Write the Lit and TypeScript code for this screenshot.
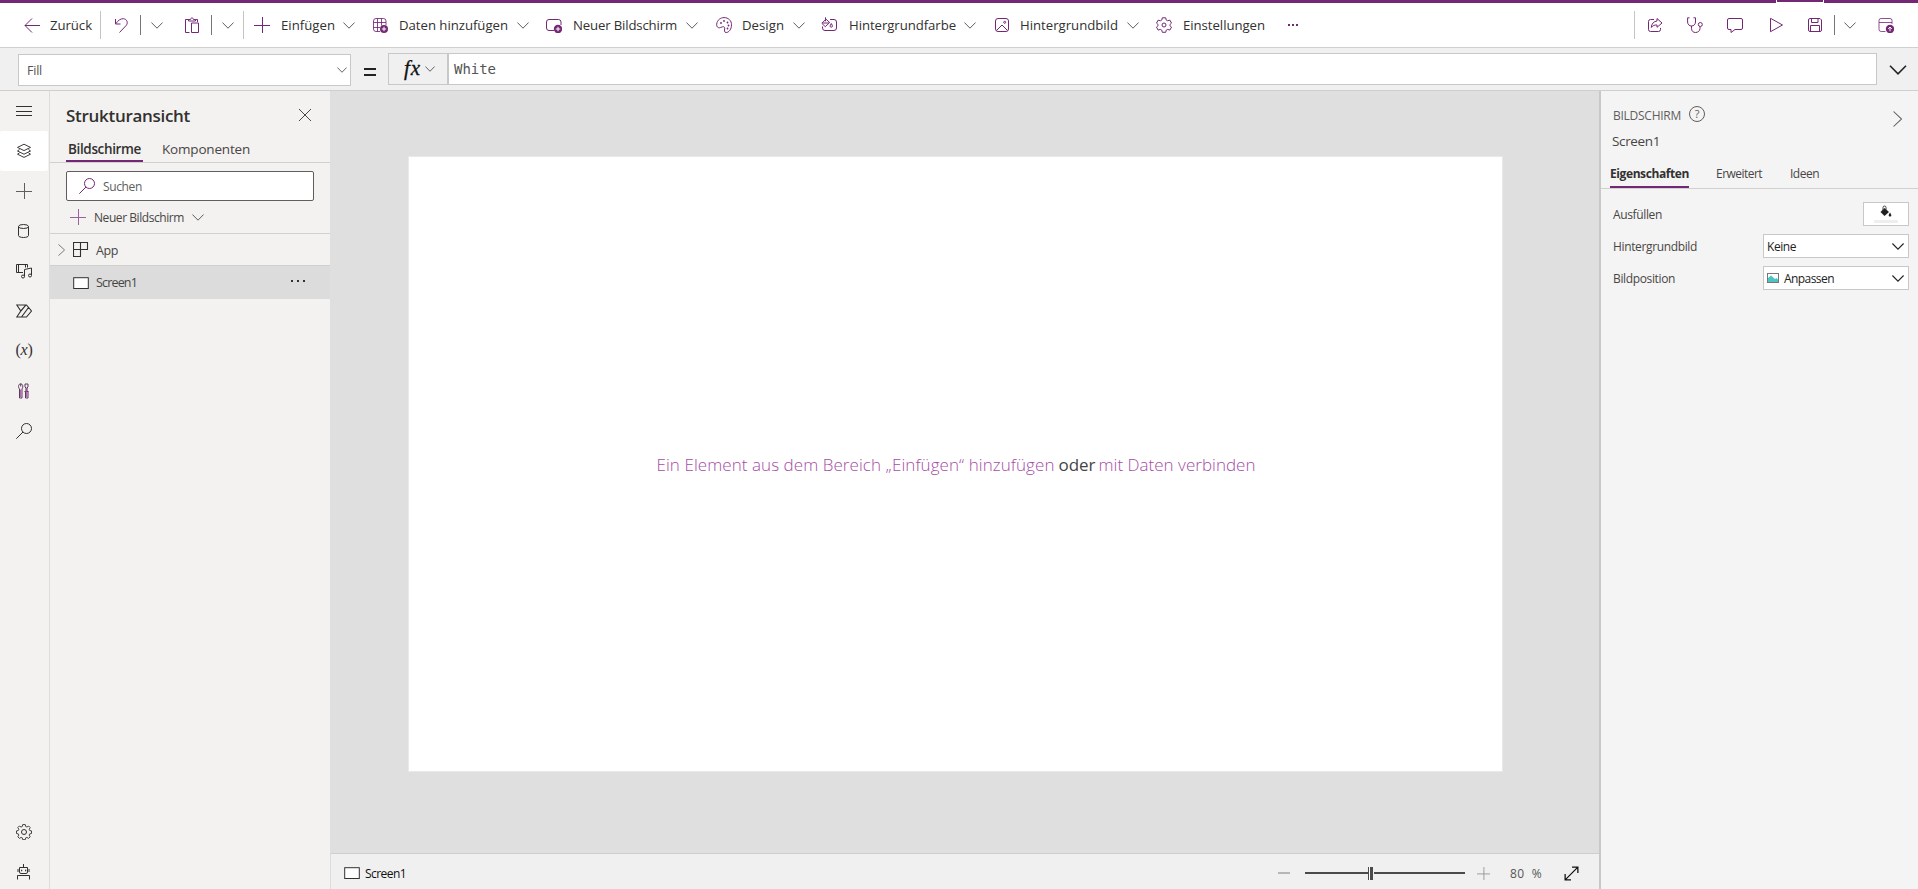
import { LitElement, html, svg, css, nothing } from 'lit';
import { customElement, property } from 'lit/decorators.js';
import { styleMap } from 'lit/directives/style-map.js';

/* A single-line label that tracks its glyphs so that it fills a given width. */
@customElement('ui-label')
class UiLabel extends LitElement {
  @property({ type: Number }) w = 0;
  static styles = css`
    :host { display: inline-block; white-space: pre; flex: none; }
    .t { display: inline-block; }
  `;
  render() {
    return html`<span class="t"><slot></slot></span>`;
  }
  firstUpdated() {
    const t = this.renderRoot.querySelector('.t') as HTMLElement;
    const n = (this.textContent ?? '').length;
    const natural = t.getBoundingClientRect().width;
    if (this.w && n) {
      t.style.letterSpacing = `${(this.w - natural) / n}px`;
      this.style.width = `${this.w}px`;
    }
  }
}

const P = '#742774';
const D = '#323130';

const glyphs: Record<string, any> = {
  back: svg`<path d="M16 8.500H1M8 1.500l-7 7 7 7"/>`,
  undo: svg`<path d="M1.500 2v5h5M1.800 6.700C4 3.500 6.500 1.500 9.500 1.700c3.500.4 4.800 4 2.800 6.600L5.500 15.500"/>`,
  paste: svg`<path d="M5.500 15.500h-4v-13h3M11.500 2.500h2V5M4.500 4V2.500h2C6.500.5 9.500.5 9.500 2.500h2V4zM7.500 6h7v9.500h-7z"/>`,
  plus: svg`<path d="M8.500 0v16M0 8.500h16"/>`,
  table: svg`<path d="M8 14.500H4a2.500 2.500 0 0 1-2.500-2.500V4A2.500 2.500 0 0 1 4 1.500h7.500A2.500 2.500 0 0 1 14 4v4M1.500 5.500H14M1.500 10.500H8M5.500 1.500v13M9.500 1.500v7" stroke-opacity=".85"/><circle cx="12" cy="12" r="4" fill=${P} stroke="none"/><path d="M12 9.800v4.400M9.800 12h4.400" stroke="#fff"/>`,
  screen: svg`<path d="M8 13.500H3A2.500 2.500 0 0 1 .5 11V5A2.500 2.500 0 0 1 3 2.500h9.500A2.500 2.500 0 0 1 15 5v3"/><circle cx="12" cy="12" r="4.200" fill=${P} stroke="none"/><path d="M12 9.800v4.400M9.800 12h4.400" stroke="#fff"/>`,
  palette: svg`<path d="M.7 7C1.200 3 4.500.6 8 .6c4.500 0 7.500 3 7.500 7.200 0 4.300-2.500 7.700-5.300 7.700-2.200 0-1.800-2.200-1.500-3.600.3-1.600-.8-2.600-2.200-2.100l-2.200.8C1.800 11.400.4 9.500.7 7z"/><g fill=${P} stroke="none"><circle cx="5" cy="6" r=".9"/><circle cx="8" cy="4" r=".9"/><circle cx="11.500" cy="5.500" r=".9"/><circle cx="12.500" cy="8.500" r=".9"/><circle cx="11.500" cy="11.500" r=".9"/></g>`,
  bucket: svg`<path d="M9 2.500h4A2.500 2.500 0 0 1 15.500 5v6a2.500 2.500 0 0 1-2.500 2.500H4A2.500 2.500 0 0 1 1.500 11V9.500M5 2.200L.8 6.300 4.300 9.700 8.700 5.500zM4.500.3v4M1.500 6h6.500M10.300 6.500c-1.800 2.600-1.300 3.700 0 3.700s1.600-1.200 0-3.700z"/>`,
  image: svg`<rect x="1.500" y="1.500" width="13" height="13" rx="2.500"/><path d="M2.500 13.500L8 8l5.500 5.500"/><circle cx="10.700" cy="5.300" r="1"/>`,
  gear: svg`<path d="M6.300.8h3.400l.5 2.200 1.500.8 2.100-.7 1.700 3-1.600 1.500v1l1.600 1.500-1.700 3-2.100-.7-1.500.8-.5 2.100H6.300l-.5-2.100-1.500-.8-2.100.7-1.700-3 1.600-1.500v-1L.5 6.100l1.700-3 2.100.7L5.800 3z"/><circle cx="8" cy="8" r="2"/>`,
  share: svg`<path d="M7 2.500H3.500a2 2 0 0 0-2 2v8a2 2 0 0 0 2 2h8a2 2 0 0 0 2-2V11M10 1.500L15 6l-5 4.300V8C7.500 7.800 6 8.500 4.300 10.500 4.500 6.500 7 4.300 10 4z"/>`,
  steth: svg`<path d="M2.500.8H.6V5c0 2.400 1.700 4 3.900 4s4-1.600 4-4V.8H6.500M4.500 9v2.500c0 2.500 1.700 4 4 4s4.500-1.500 4.500-4V9.500"/><circle cx="13.300" cy="7.500" r="2"/>`,
  comment: svg`<path d="M2 1.500h12A1.500 1.500 0 0 1 15.500 3v8a1.500 1.500 0 0 1-1.500 1.500H8l-4 3v-3H2A1.500 1.500 0 0 1 .5 11V3A1.500 1.500 0 0 1 2 1.500z"/>`,
  play: svg`<path d="M2.500 1.300v13.400L14.500 8z"/>`,
  save: svg`<path d="M3 1.500h10L14.500 3v10a1.500 1.500 0 0 1-1.500 1.500H3A1.500 1.500 0 0 1 1.500 13V3A1.500 1.500 0 0 1 3 1.500zM4.500 1.500v4h6.500v-4M3.500 14.500v-6h9v6"/>`,
  publish: svg`<path d="M7.500 14.500H3.200A2.200 2.200 0 0 1 1 12.300V3.500a2 2 0 0 1 2-2h9a2 2 0 0 1 2 2V7M1 5.500h13" stroke-opacity=".8"/><circle cx="12" cy="12" r="4.200" fill=${P} stroke="none"/><path d="M12 14.300V10M10.200 11.800L12 10l1.800 1.800" stroke="#fff"/>`,
  menu: svg`<path d="M0 3.500h16M0 8.500h16M0 12.500h16"/>`,
  layers: svg`<path d="M8 1.200l6.500 3.200L8 7.600 1.500 4.400zM1.500 8L8 11.200 14.500 8M1.500 11.200L8 14.400l6.500-3.200M3.500 6.500L1.500 8M12.500 6.500l2 1.500M3.500 9.800l-2 1.400M12.500 9.800l2 1.400" stroke-width=".95"/>`,
  db: svg`<ellipse cx="7.500" cy="3.500" rx="5" ry="2"/><path d="M2.500 3.500v9c0 1.200 2.200 2 5 2s5-.8 5-2v-9"/>`,
  media: svg`<path d="M7 9.500H.5v-8h11v3M2.500 1.500v8M9.500 1.500v3M8.500 13.500v-7l7-1.500v7"/><circle cx="7" cy="13.500" r="1.500"/><circle cx="14" cy="12.500" r="1.500"/>`,
  flow: svg`<path d="M.8 2h9.700L15.500 8l-5 6H.8l4-6zM4.800 8l5-5.800M5.500 14L12.500 4.500" stroke-width="1.150"/>`,
  tools: svg`<path d="M3.500 6v9h2.500V6M3.500 6C1.800 4 2.500.8 4.700.8S7.500 4 6 6M4.700.8v2.700M9 1h3v3l-1 1v3.500M9 1v3l1 1v3.500M8.500 8.500h4M9.500 8.500V15h2.500V8.500" stroke="#5c3a5c"/><path d="M4.700 6.500V14M10.700 4.500V14" stroke="#a04aa0"/>`,
  search: svg`<circle cx="10.500" cy="5.500" r="5"/><path d="M7 9L.3 15.700"/>`,
  cog: svg`<path d="M6.700.6h2.600l.4 1.900 1.200.5 1.700-1 1.600 1.600-1 1.700.5 1.200 1.800.4v2.600l-1.800.4-.5 1.200 1 1.700-1.600 1.600-1.700-1-1.200.5-.4 1.800H6.700l-.4-1.800-1.200-.5-1.700 1-1.600-1.600 1-1.700-.5-1.200L.5 9.500V6.900l1.800-.4.5-1.200-1-1.700L3.400 2l1.700 1 1.200-.5z" stroke-width=".9"/><circle cx="8" cy="8" r="2.500"/>`,
  bot: svg`<path d="M7.500 0v3M3.500 3.500h8v4.500a1.500 1.500 0 0 1-1.500 1.500H5A1.500 1.500 0 0 1 3.500 8zM2 5v3M13 5v3M1.500 15.500v-4h12v4"/><path d="M5 6.500h1.200M9 6.500h1.200" stroke-width="1.500"/>`,
  close: svg`<path d="M2 2l12 12M14 2L2 14"/>`,
  app: svg`<path d="M.5.500h14v7H.5zM7.500.500v14h-7V.500" stroke-width="1.100"/>`,
  rect: svg`<rect x=".7" y="2.700" width="14.600" height="10.800" fill="#fff"/>`,
  minus: svg`<path d="M2 8h12" />`,
  expand: svg`<path d="M2 14L14 2M8.500 2H14v5.500M2 8.500V14h5.500"/>`,
};

const icon = (name: string, color = P, size = 16, sw = 1) => html`<svg
  width=${size} height=${size} viewBox="0 0 16 16" fill="none" stroke=${color}
  stroke-width=${sw} style="flex:none;display:block">${glyphs[name]}</svg>`;

const chev = (w = 12, color = '#605e5c', sw = 1) => html`<svg
  width=${w} height=${w / 2 + 1} viewBox="0 0 12 7" fill="none" stroke=${color}
  stroke-width=${sw} style="flex:none;display:block"><path d="M.4 .5L6 6.200 11.600 .5"/></svg>`;

const chevRight = (w: number, h: number, color = '#605e5c') => html`<svg
  width=${w} height=${h} viewBox="0 0 8 16" fill="none" stroke=${color}
  preserveAspectRatio="none" style="flex:none;display:block"><path d="M.5 .5L7.500 8 .5 15.500"/></svg>`;

type Command = { icon: string; text: string; w: number; gap: number; lead: number; menu: number };

const commands: Command[] = [
  { icon: 'plus', text: 'Einfügen', w: 54, gap: 10, lead: 11, menu: 8 },
  { icon: 'table', text: 'Daten hinzufügen', w: 109, gap: 17, lead: 11, menu: 9 },
  { icon: 'screen', text: 'Neuer Bildschirm', w: 104, gap: 17, lead: 11, menu: 9 },
  { icon: 'palette', text: 'Design', w: 42, gap: 18, lead: 10, menu: 9 },
  { icon: 'bucket', text: 'Hintergrundfarbe', w: 107, gap: 16, lead: 12, menu: 8 },
  { icon: 'image', text: 'Hintergrundbild', w: 98, gap: 18, lead: 10, menu: 9 },
  { icon: 'gear', text: 'Einstellungen', w: 82, gap: 17, lead: 11, menu: 0 },
];

@customElement('app-root')
class AppRoot extends LitElement {
  static styles = css`
    :host {
      display: grid;
      grid-template-rows: 48px 43px 1fr;
      width: 1918px;
      height: 889px;
      overflow: hidden;
      box-sizing: border-box;
      font-family: 'Open Sans', 'Noto Sans', sans-serif;
      font-size: 13px;
      color: #323130;
      background: #f3f2f1;
    }
    * { box-sizing: border-box; }
    .toolbar {
      display: flex; align-items: center; background: #fff;
      border-top: 3px solid #742774; border-bottom: 1px solid #d0d0d0;
      padding-left: 24px; position: relative; font-size: 13.2px;
    }
    .notch {
      position: absolute; left: 1776px; top: -3px; width: 48px; height: 3px;
      border: 1px solid #fff; border-top: none;
    }
    .cmd { display: flex; align-items: center; }
    .sep { width: 1px; height: 28px; background: #c4c4c4; flex: none; }
    .bar { width: 1px; height: 20px; background: #767676; flex: none; }
    .right { display: flex; align-items: center; margin-left: auto; }
    .dots { display: flex; gap: 2px; margin-left: 23px; }
    .dots i { width: 2px; height: 2px; background: #742774; }

    .formula {
      display: flex; align-items: flex-start; background: #f0f0f0;
      border-bottom: 1px solid #cfcfcf; padding: 5px 0 0 18px;
    }
    .prop {
      display: flex; align-items: center; justify-content: space-between;
      width: 333px; height: 32px; margin-top: 1px; padding: 0 3px 0 8px;
      background: #fff; border: 1px solid #c8c8c8; font-size: 12.500px; color: #555;
    }
    .eq { margin: 15px 12px 0 13px; width: 12px; height: 8px;
      border: solid #222; border-width: 2px 0; }
    .fx { display: flex; align-items: center; width: 60px; height: 32px;
      border: 1px solid #c8c8c8; padding-left: 15px; gap: 4px;
      font: italic 21px 'Liberation Serif', serif; color: #111; line-height: 26px;
      -webkit-text-stroke: .3px #111; }
    .fx ui-label { height: 29px; }
    .input { width: 1429px; height: 32px; background: #fff; border: 1px solid #c8c8c8;
      padding-left: 5px; font: 14px/30px 'DejaVu Sans Mono', monospace; color: #555; }
    .more { margin: 12px 0 0 12px; }

    .body { display: grid; grid-template-columns: 50px 280px 1269px 1fr; min-height: 0; }
    .rail { display: flex; flex-direction: column; border-right: 1px solid #dcdcdc; background: #f3f2f1; min-height: 0; }
    .rail .cell { width: 48px; height: 40px; display: grid; place-items: center; flex: none; border-radius: 2px; }
    .rail .on { background: #fff; }
    .rail .push { margin-top: auto; }
    .rail .cell:last-child { margin-bottom: -3px; }
    .rail .var { font: 16px 'Liberation Serif', serif; line-height: 18px; padding-bottom: 3px; }
    .tree { background: #f3f2f1; display: flex; flex-direction: column; min-width: 0; }
    .head { display: flex; align-items: center; justify-content: space-between;
      height: 48px; padding: 0 17px 0 16px; font-size: 17px; font-weight: 600; }
    .tabs { display: flex; height: 24px; padding-left: 16px; border-bottom: 1px solid #d0d0d0;
      font-size: 13.500px; line-height: 21px; color: #484644; }
    .tab { padding: 0 2px; height: 23px; }
    .tab.on { font-weight: 600; color: #323130; border-bottom: 2px solid #742774; }
    .search { display: flex; align-items: center; gap: 8px; margin: 8px 16px 0; height: 30px;
      border: 1px solid #605e5c; border-radius: 2px; background: #fff; padding-left: 12px;
      font-size: 12px; color: #605e5c; }
    .new { display: flex; align-items: center; padding: 0 0 0 20px; font-size: 12px; gap: 8px;
      border-bottom: 1px solid #d0d0d0; height: 33px; color: #484644; }
    .node { display: flex; align-items: center; height: 32px; padding-left: 23px;
      border-bottom: 1px solid #d0d0d0; font-size: 12.500px; color: #484644; }
    .node.app { padding-left: 8px; }
    .node.app ui-label { padding-top: 2px; }
    .node.sel { background: #dcdcdc; height: 33px; border: none; }
    .ell { display: flex; gap: 4px; margin-left: auto; padding-right: 25px; padding-bottom: 4px; }
    .ell i { width: 2px; height: 2px; background: #323130; }

    .stage { display: grid; grid-template-rows: 1fr 36px; background: #dfdfdf; min-width: 0; }
    .canvas { display: flex; align-items: flex-start; padding: 65px 0 0 78px; }
    .page { width: 1095px; height: 616px; background: #fff; border: 1px solid #e9e9e9;
      display: flex; justify-content: center; align-items: center; font-size: 17px; line-height: 24px;
      padding: 2px 0 0 1px; }
    .link { color: #a54ca5; font-weight: 300; }
    .or { margin: 0 3px 0 4px; color: #444; }
    .status { display: flex; align-items: center; background: #f0f0f0; border-top: 1px solid #cfcfcf;
      border-left: 1px solid #dcdcdc; padding: 3px 0 0 13px; font-size: 12px; color: #111; }
    .zoom { display: flex; align-items: center; margin-left: auto; color: #555; }
    .track { display: flex; align-items: center; width: 160px; margin: 0 12px 0 13px; }
    .track .a { height: 2px; width: 63px; background: #4a4a4a; }
    .track .b { height: 2px; flex: 1; background: #4a4a4a; }
    .thumb { width: 5px; height: 13px; border: solid #4a4a4a; border-width: 0 3px 0 1px; background: #fff; margin-right: 1px; }

    .props { background: #f4f4f4; border-left: 2px solid #c8c8c8; font-size: 12px; color: #484644; }
    .phead { display: flex; height: 39px; padding: 0 16px 0 12px; color: #605e5c; }
    .phead ui-label { margin-top: 16px; line-height: 17px; }
    .help { margin: 15px 0 0 8px; width: 16px; height: 16px; border: 1px solid #605e5c; border-radius: 50%;
      font-size: 11px; line-height: 14px; text-align: center; }
    .go { margin: 20px 0 0 auto; }
    .pname { padding: 1px 0 0 11px; font-size: 13.500px; line-height: 20px; height: 36px; }
    .ptabs { display: flex; height: 23px; padding-left: 9px; border-bottom: 1px solid #d0d0d0; line-height: 16px; }
    .ptabs .on { font-weight: 700; color: #323130; border-bottom: 2px solid #742774; height: 22px; margin-right: 27px; }
    .ptabs .mid { margin-right: 28px; }
    .rows { display: flex; flex-direction: column; gap: 8px; padding: 13px 9px 0 12px; }
    .row { display: flex; align-items: center; justify-content: space-between; height: 24px; }
    .box { display: flex; align-items: center; border: 1px solid #c8c8c8; background: #fff; height: 24px;
      width: 146px; padding: 0 4px 0 3px; color: #222; gap: 5px; }
    .box svg:last-child { margin-left: auto; }
    .box.fill { width: 46px; padding: 2px 0 0; flex-direction: column; gap: 0; }
    .shade { width: 24px; height: 3px; margin-top: 1px; background: #eee; border-radius: 1px; }
  `;

  private gap(px: number) {
    return html`<span style=${styleMap({ width: `${px}px`, flex: 'none' })}></span>`;
  }

  private toolbar() {
    const g = this.gap;
    return html`<div class="toolbar">
      <div class="notch"></div>
      ${icon('back')}${g(10)}<ui-label w="42">Zurück</ui-label>${g(8)}<div class="sep"></div>
      ${g(13)}${icon('undo')}${g(10)}<div class="bar"></div>${g(10)}${chev()}
      ${g(21)}${icon('paste')}${g(11)}<div class="bar"></div>${g(10)}${chev()}
      ${g(9)}<div class="sep"></div>
      ${commands.map(
        (c) => html`${g(c.gap)}<div class="cmd">${icon(c.icon)}${g(c.lead)}<ui-label w=${c.w}>${c.text}</ui-label>
          ${c.menu ? html`${g(c.menu)}${chev()}` : nothing}</div>`,
      )}
      <div class="dots"><i></i><i></i><i></i></div>
      <div class="right">
        <div class="sep"></div>${g(12)}${icon('share')}${g(24)}${icon('steth')}${g(24)}${icon('comment')}
        ${g(25)}${icon('play')}${g(23)}${icon('save')}${g(11)}<div class="bar"></div>${g(9)}${chev()}
        ${g(22)}${icon('publish')}${g(24)}
      </div>
    </div>`;
  }

  private formula() {
    return html`<div class="formula">
      <div class="prop"><ui-label w="15">Fill</ui-label>${chev(10, '#444')}</div>
      <div class="eq"></div>
      <div class="fx"><ui-label w="17">fx</ui-label>${chev(10, '#444')}</div>
      <div class="input"><ui-label w="42">White</ui-label></div>
      <div class="more">${chev(18, '#222', 1.1)}</div>
    </div>`;
  }

  private rail() {
    const cell = (n: string, cls = '') => html`<div class="cell ${cls}">${icon(n, D)}</div>`;
    return html`<div class="rail">
      ${cell('menu')}${cell('layers', 'on')}
      <div class="cell">${icon('plus', '#605e5c')}</div>
      ${cell('db')}${cell('media')}${cell('flow')}
      <div class="cell var"><ui-label w="17">(<i>x</i>)</ui-label></div>
      ${cell('tools')}${cell('search')}${cell('cog', 'push')}${cell('bot')}
    </div>`;
  }

  private tree() {
    return html`<div class="tree">
      <div class="head"><ui-label w="124">Strukturansicht</ui-label>${icon('close', '#484644')}</div>
      <div class="tabs">
        <div class="tab on"><ui-label w="73">Bildschirme</ui-label></div>${this.gap(17)}
        <div class="tab"><ui-label w="88">Komponenten</ui-label></div>
      </div>
      <div class="search">${icon('search')}<ui-label w="39">Suchen</ui-label></div>
      <div class="new">${icon('plus', '#9a629a')}<ui-label w="90">Neuer Bildschirm</ui-label>${chev()}</div>
      <div class="node app">${chevRight(7, 12)}${this.gap(8)}${icon('app', D)}${this.gap(7)}<ui-label w="22">App</ui-label></div>
      <div class="node sel">${icon('rect', D)}${this.gap(7)}<ui-label w="41">Screen1</ui-label>
        <div class="ell"><i></i><i></i><i></i></div></div>
    </div>`;
  }

  private stage() {
    return html`<div class="stage">
      <div class="canvas"><div class="page">
        <ui-label class="link" w="398">Ein Element aus dem Bereich „Einfügen“ hinzufügen</ui-label>
        <ui-label class="or" w="37">oder</ui-label>
        <ui-label class="link" w="157">mit Daten verbinden</ui-label>
      </div></div>
      <div class="status">
        ${icon('rect', D)}${this.gap(5)}<ui-label w="41">Screen1</ui-label>
        <div class="zoom">
          ${icon('minus', '#a8a8a8', 16, 1.6)}
          <div class="track"><div class="a"></div><div class="thumb"></div><div class="b"></div></div>
          ${icon('plus', '#8b8b8b', 13)}${this.gap(20)}<ui-label w="32">80  %</ui-label>${this.gap(21)}
          ${icon('expand', '#111', 17, 1.2)}${this.gap(19)}
        </div>
      </div>
    </div>`;
  }

  private props() {
    return html`<div class="props">
      <div class="phead"><ui-label w="68">BILDSCHIRM</ui-label><div class="help">?</div>
        <div class="go">${chevRight(9, 16)}</div></div>
      <div class="pname"><ui-label w="48">Screen1</ui-label></div>
      <div class="ptabs"><div class="on"><ui-label w="79">Eigenschaften</ui-label></div>
        <ui-label class="mid" w="46">Erweitert</ui-label><ui-label w="29">Ideen</ui-label></div>
      <div class="rows">
        <div class="row"><ui-label w="49">Ausfüllen</ui-label>
          <div class="box fill">
            <svg width="14" height="14" viewBox="0 0 14 14"><path d="M5.500 3L10 7 5.500 11 1.500 7z" fill="#222"/><path d="M4 5V2.500a1.500 1.500 0 0 1 3 0V5" fill="none" stroke="#444"/><path d="M11 7.500c2 3 1.500 4 0 4s-2-1 0-4z" fill="#222"/></svg>
            <div class="shade"></div>
          </div></div>
        <div class="row"><ui-label w="84">Hintergrundbild</ui-label>
          <div class="box"><ui-label w="29">Keine</ui-label>${chev(12, '#222', 1.1)}</div></div>
        <div class="row"><ui-label w="62">Bildposition</ui-label>
          <div class="box">
            <svg width="12" height="10" viewBox="0 0 12 10"><rect x=".5" y=".5" width="11" height="9" fill="#fff" stroke="#777"/><path d="M1 5l3-2.500L8 6l1.500-1L11 6.500V9H1z" fill="#4fc3c0"/></svg>
            <ui-label w="50">Anpassen</ui-label>${chev(12, '#222', 1.1)}</div></div>
      </div>
    </div>`;
  }

  render() {
    return html`${this.toolbar()}${this.formula()}
      <div class="body">${this.rail()}${this.tree()}${this.stage()}${this.props()}</div>`;
  }
}
